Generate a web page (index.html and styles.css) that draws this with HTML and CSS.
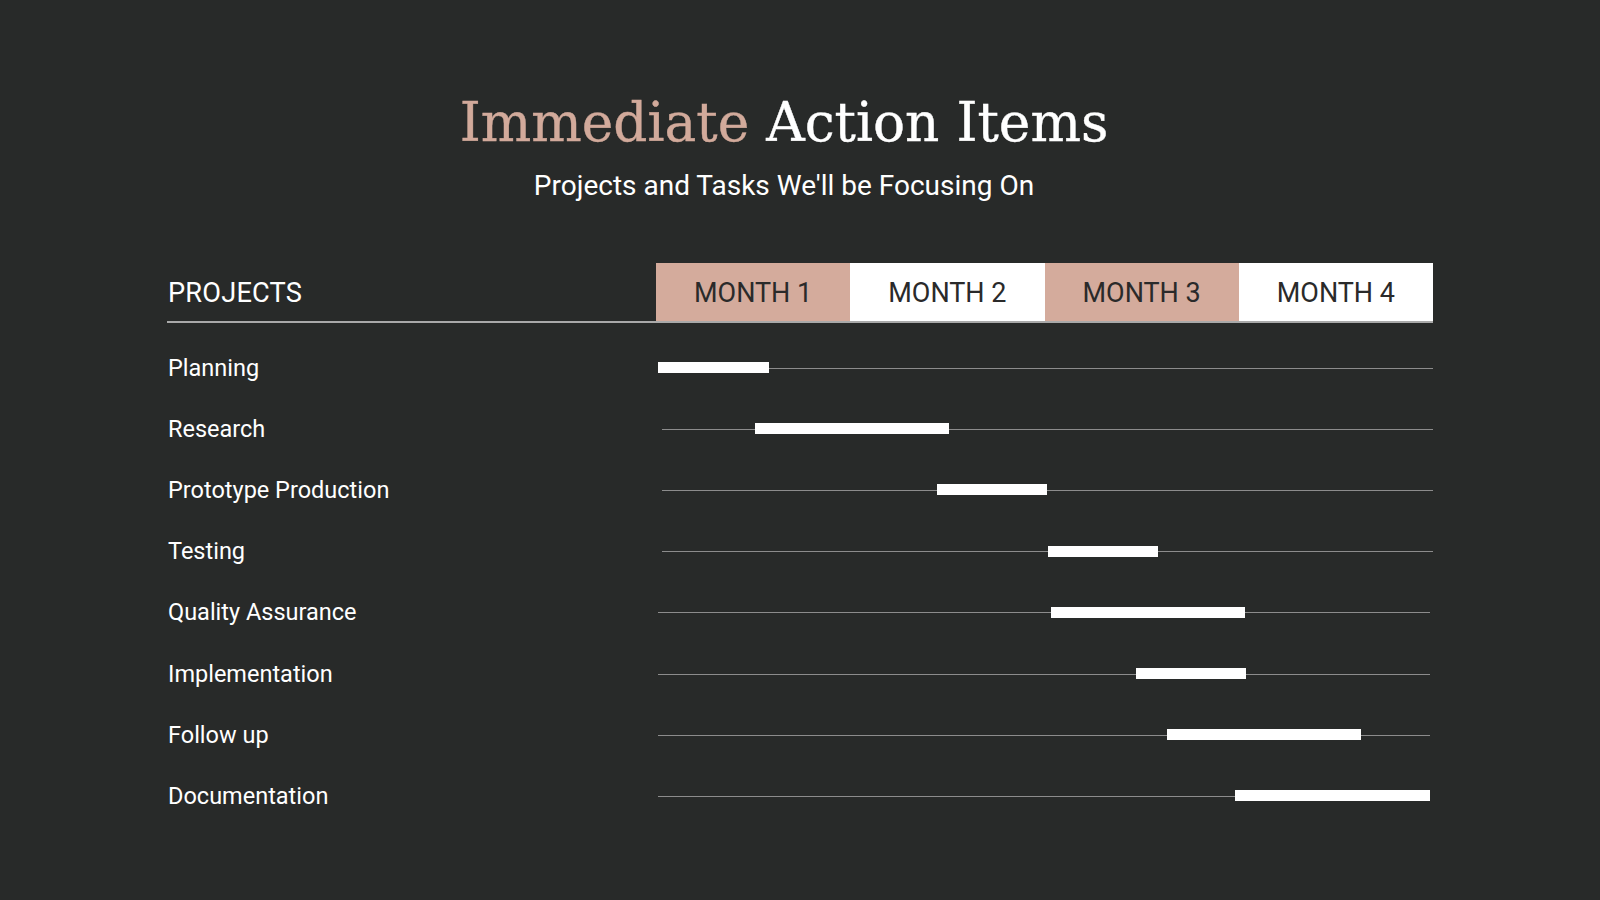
FILE: index.html
```html
<!DOCTYPE html>
<html lang="en">
<head>
<meta charset="utf-8">
<title>Immediate Action Items</title>
<link rel="stylesheet" href="styles.css">
</head>
<body>
<main class="slide">
  <header class="heading">
    <h1 class="title"><span class="accent">Immediate</span> Action Items</h1>
    <p class="subtitle">Projects and Tasks We'll be Focusing On</p>
  </header>

  <section class="gantt">
    <div class="head">
      <div class="head-label">PROJECTS</div>
      <div class="month pink">MONTH 1</div>
      <div class="month white">MONTH 2</div>
      <div class="month pink">MONTH 3</div>
      <div class="month white">MONTH 4</div>
    </div>

    <div class="row">
      <div class="label">Planning</div>
      <div class="track a"><span class="bar" style="margin-left:2px;width:111px"></span></div>
    </div>
    <div class="row">
      <div class="label">Research</div>
      <div class="track a"><span class="bar" style="margin-left:99px;width:194px"></span></div>
    </div>
    <div class="row">
      <div class="label">Prototype Production</div>
      <div class="track a"><span class="bar" style="margin-left:281px;width:110px"></span></div>
    </div>
    <div class="row">
      <div class="label">Testing</div>
      <div class="track a"><span class="bar" style="margin-left:392px;width:110px"></span></div>
    </div>
    <div class="row">
      <div class="label">Quality Assurance</div>
      <div class="track b"><span class="bar" style="margin-left:395px;width:194px"></span></div>
    </div>
    <div class="row">
      <div class="label">Implementation</div>
      <div class="track b"><span class="bar" style="margin-left:480px;width:110px"></span></div>
    </div>
    <div class="row">
      <div class="label">Follow up</div>
      <div class="track b"><span class="bar" style="margin-left:511px;width:194px"></span></div>
    </div>
    <div class="row">
      <div class="label">Documentation</div>
      <div class="track b"><span class="bar" style="margin-left:579px;width:195px"></span></div>
    </div>
  </section>
</main>
</body>
</html>
```
FILE: styles.css
```css
* { box-sizing: border-box; }

html, body {
  margin: 0;
  padding: 0;
}

body {
  background: #282a29;
  width: 1600px;
  height: 900px;
  overflow: hidden;
  font-family: Roboto, "Liberation Sans", sans-serif;
  color: #ffffff;
}

.slide {
  width: 1600px;
  height: 900px;
  padding-top: 91px;
}

.heading {
  text-align: center;
  padding-right: 32px;
}

.title {
  margin: 0;
  font-family: "DejaVu Serif", "Liberation Serif", serif;
  font-weight: normal;
  font-size: 53.3px;
  line-height: 64px;
  color: #ffffff;
  -webkit-text-stroke: 0.4px currentColor;
}

.accent {
  color: #d2aa9b;
}

.subtitle {
  margin: 14px 0 0;
  font-size: 28px;
  line-height: 34px;
  color: #ffffff;
}

.gantt {
  margin: 60px 0 0 167px;
  width: 1266px;
}

.head {
  display: grid;
  grid-template-columns: 489px repeat(4, 1fr);
  height: 60px;
  border-bottom: 2px solid #a9a9a9;
}

.head-label {
  display: flex;
  align-items: center;
  padding-left: 1px;
  padding-top: 2px;
  font-size: 27.2px;
  letter-spacing: 0.2px;
}

.month {
  display: flex;
  align-items: center;
  justify-content: center;
  font-size: 27px;
  color: #2a2a2a;
  padding-top: 2px;
}

.month.pink { background: #d4ab9c; }
.month.white { background: #ffffff; }

.row {
  display: grid;
  grid-template-columns: 489px 1fr;
  height: 61.2px;
  align-items: center;
}

.head + .row { margin-top: 14px; }

.label {
  font-size: 23.5px;
  padding-left: 1px;
}

.track {
  position: relative;
  height: 12px;
  display: flex;
  align-items: center;
}

.track::before {
  content: "";
  position: absolute;
  top: 50%;
  height: 1px;
  background: #8c8c8c;
}

.track.a::before { left: 6px; right: 0; }
.track.b::before { left: 2px; right: 3px; }

.bar {
  position: relative;
  display: block;
  height: 11px;
  background: #ffffff;
}
```
